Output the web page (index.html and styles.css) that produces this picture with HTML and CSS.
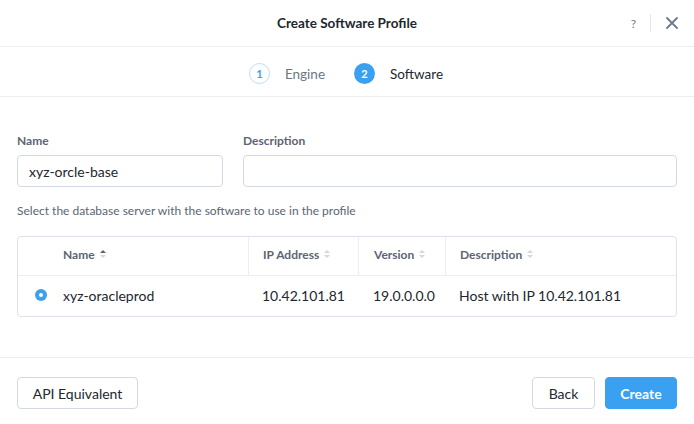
FILE: index.html
```html
<!DOCTYPE html>
<html>
<head>
<meta charset="utf-8">
<link rel="stylesheet" href="styles.css">
</head>
<body>
<div class="modal">
  <div class="header">
    <div class="title">Create Software Profile</div>
    <div class="header-actions">
      <span class="help">?</span>
      <span class="vsep"></span>
      <svg class="close" width="12" height="12" viewBox="0 0 12 12"><path d="M1 1L11 11M11 1L1 11" stroke="#6b7a8c" stroke-width="1.8" stroke-linecap="round"/></svg>
    </div>
  </div>
  <div class="steps">
    <div class="step">
      <span class="circle done">1</span>
      <span class="step-label muted">Engine</span>
    </div>
    <div class="step">
      <span class="circle active">2</span>
      <span class="step-label">Software</span>
    </div>
  </div>
  <div class="body">
    <div class="fields">
      <div class="field name-field">
        <label class="label">Name</label>
        <div class="input">xyz-orcle-base</div>
      </div>
      <div class="field desc-field">
        <label class="label">Description</label>
        <div class="input"></div>
      </div>
    </div>
    <div class="hint">Select the database server with the software to use in the profile</div>
    <div class="table">
      <div class="row head">
        <div class="cell c-radio"></div>
        <div class="cell c-name">Name <span class="sort"><i class="up dark"></i><i class="down"></i></span></div>
        <div class="cell c-ip div">IP Address <span class="sort"><i class="up"></i><i class="down"></i></span></div>
        <div class="cell c-ver div">Version <span class="sort"><i class="up"></i><i class="down"></i></span></div>
        <div class="cell c-desc div">Description <span class="sort"><i class="up"></i><i class="down"></i></span></div>
      </div>
      <div class="row data">
        <div class="cell c-radio"><span class="radio"></span></div>
        <div class="cell c-name">xyz-oracleprod</div>
        <div class="cell c-ip">10.42.101.81</div>
        <div class="cell c-ver">19.0.0.0.0</div>
        <div class="cell c-desc">Host with IP 10.42.101.81</div>
      </div>
    </div>
  </div>
  <div class="footer">
    <button class="btn api">API Equivalent</button>
    <div class="right">
      <button class="btn back">Back</button>
      <button class="btn primary">Create</button>
    </div>
  </div>
</div>
</body>
</html>
```
FILE: styles.css
```css
* { box-sizing: border-box; }
html, body { margin: 0; padding: 0; background: #fff; }
body { font-family: Lato, "Open Sans", sans-serif; color: #22272e; width: 694px; height: 424px; overflow: hidden; }
.modal { display: flex; flex-direction: column; height: 424px; }
.header { height: 47px; flex: none; border-bottom: 1px solid #eceef1; display: flex; align-items: center; justify-content: center; position: relative; }
.title { font-size: 13.5px; font-weight: 700; color: #22272e; }
.header-actions { position: absolute; right: 16px; top: 14px; display: flex; align-items: center; height: 18px; }
.help { font-size: 12px; color: #6b7a8c; font-weight: 400; }
.vsep { width: 1px; height: 18px; background: #e1e5ea; margin: 0 15px 0 14px; }
.close { display: block; }
.steps { height: 50px; flex: none; border-bottom: 1px solid #eceef1; display: flex; align-items: center; justify-content: center; gap: 29px; padding: 4px 2px 0 0; }
.step { display: flex; align-items: center; gap: 15px; }
.circle { width: 21px; height: 21px; border-radius: 50%; display: flex; align-items: center; justify-content: center; font-size: 11px; font-weight: 700; }
.circle.done { border: 1px solid #b9ddfb; color: #3a9ff0; background: #fff; }
.circle.active { background: #3aa1f2; color: #fff; }
.step-label { font-size: 13.5px; color: #22272e; }
.step-label.muted { color: #6b7684; }
.body { padding: 37px 17px 0 17px; flex: 1; }
.fields { display: flex; gap: 20px; }
.field { display: flex; flex-direction: column; }
.name-field { width: 206px; }
.desc-field { flex: 1; }
.label { font-size: 12px; font-weight: 700; color: #5b6573; line-height: 14px; margin-bottom: 7px; }
.input { height: 32px; border: 1px solid #d3d9e0; border-radius: 4px; padding: 0 11px; font-size: 14px; display: flex; align-items: center; color: #22272e; }
.hint { font-size: 12px; color: #5b6573; margin-top: 17px; line-height: 14px; }
.table { margin-top: 18px; border: 1px solid #dde2e8; border-radius: 4px; }
.row { display: flex; }
.row.head { height: 39px; border-bottom: 1px solid #eceef1; }
.row.head .cell { padding-bottom: 4px; }
.row.data { height: 40px; }
.row.data .cell { padding-bottom: 2px; }
.cell { display: flex; align-items: center; font-size: 14px; color: #22272e; }
.head .cell { font-size: 12px; font-weight: 700; color: #5b6573; }
.cell.div { border-left: 1px solid #eceef1; }
.c-radio { width: 45px; padding-left: 17px; }
.c-name { width: 185px; }
.c-ip { width: 110px; padding-left: 14px; }
.c-ver { width: 87px; padding-left: 15px; }
.c-desc { flex: 1; padding-left: 14px; }
.radio { width: 12px; height: 12px; border-radius: 50%; background: #3aa1f2; position: relative; display: block; }
.radio::after { content: ""; position: absolute; left: 4px; top: 4px; width: 4px; height: 4px; border-radius: 50%; background: #fff; }
.sort { display: inline-flex; flex-direction: column; gap: 2px; margin-left: 5px; }
.sort i { display: block; width: 0; height: 0; border-left: 3px solid transparent; border-right: 3px solid transparent; }
.sort i.up { border-bottom: 3px solid #d3d8de; }
.sort i.up.dark { border-bottom-color: #5b6573; }
.sort i.down { border-top: 3px solid #d3d8de; }
.footer { height: 67px; flex: none; border-top: 1px solid #eceef1; display: flex; align-items: flex-start; justify-content: space-between; padding: 19px 17px 0 17px; }
.right { display: flex; gap: 10px; }
.btn { height: 32px; border: 1px solid #d3d9e0; border-radius: 4px; background: #fff; font-family: inherit; font-size: 14px; color: #22272e; padding: 0; cursor: pointer; }
.btn.api { width: 121px; }
.btn.back { width: 63px; }
.btn.primary { background: #3aa1f2; border-color: #3aa1f2; color: #fff; font-weight: 700; width: 72px; }
```
